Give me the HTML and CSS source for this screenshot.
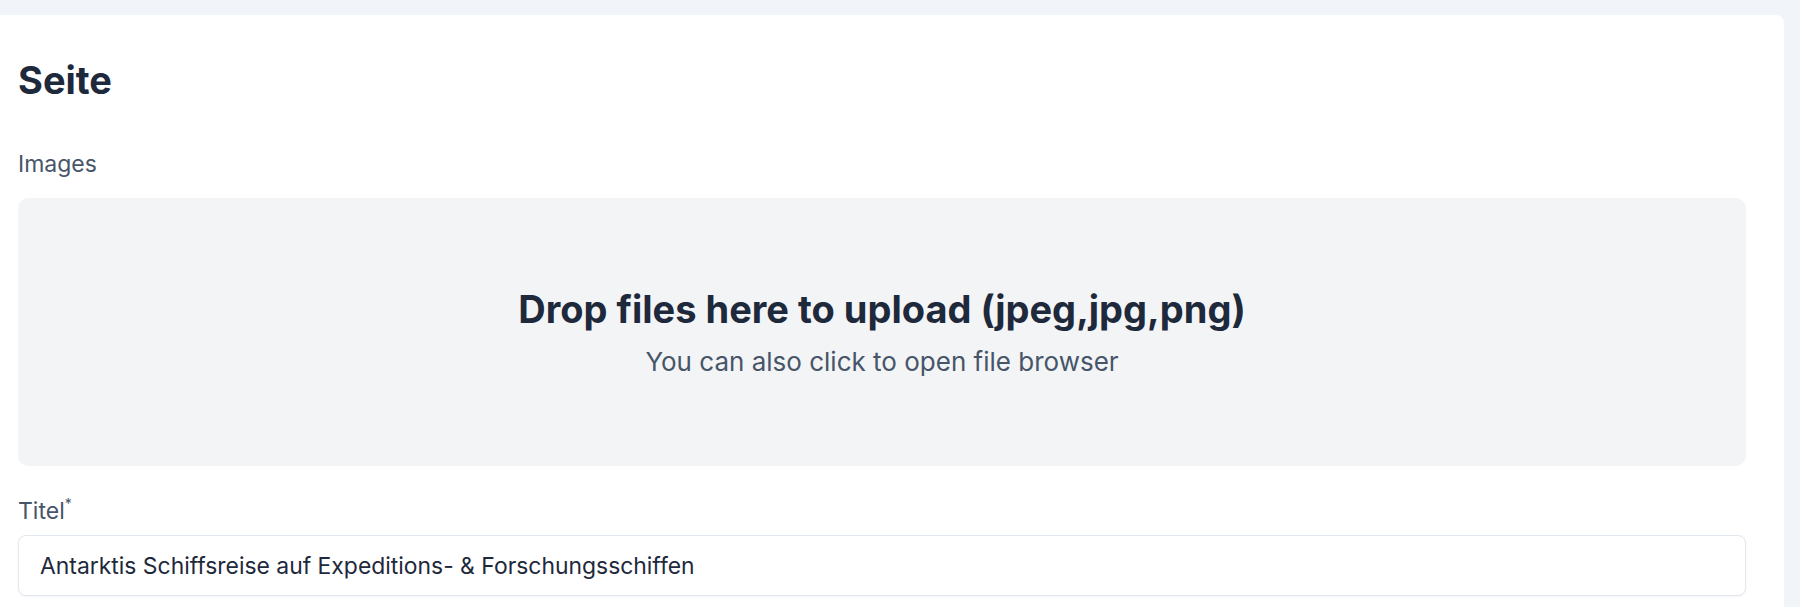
FILE: index.html
```html
<!DOCTYPE html>
<html lang="de">
<head>
  <meta charset="UTF-8">
  <title>Seite</title>
  <link rel="stylesheet" href="styles.css">
</head>
<body>

  <div class="page-card">
    <h1 class="section-title">Seite</h1>

    <div class="field">
      <label class="field-label">Images</label>
      <div class="dropzone">
        <p class="dropzone-title">Drop files here to upload (jpeg,jpg,png)</p>
        <p class="dropzone-hint">You can also click to open file browser</p>
      </div>
    </div>

    <div class="field field-title">
      <label class="field-label" for="titleInput">Titel<sup class="required">*</sup></label>
      <input type="text" id="titleInput" class="text-input" value="Antarktis Schiffsreise auf Expeditions- &amp; Forschungsschiffen">
    </div>
  </div>

</body>
</html>
```

FILE: styles.css
```css
* {
  box-sizing: border-box;
}

body {
  margin: 0;
  padding: 15px 16px 0 0;
  font-family: 'Inter', 'Noto Sans', sans-serif;
  background: #f1f4f8;
  height: 100vh;
  overflow: hidden;
}

.page-card {
  background: white;
  border-top-right-radius: 8px;
  padding: 45px 38px 0 18px;
  height: 100%;
}

.section-title {
  margin: 0;
  font-size: 38px;
  line-height: 40px;
  font-weight: 700;
  color: #1e293b;
}

.field {
  display: flex;
  flex-direction: column;
}

.field-label {
  font-size: 23px;
  line-height: 28px;
  color: #475569;
}

.section-title + .field {
  margin-top: 50px;
}

.dropzone {
  margin-top: 20px;
  height: 268px;
  background: #f3f4f6;
  border-radius: 10px;
  display: flex;
  flex-direction: column;
  justify-content: center;
  align-items: center;
  gap: 16px;
  padding-top: 2px;
  cursor: pointer;
}

.dropzone p {
  margin: 0;
}

.dropzone-title {
  font-size: 38px;
  line-height: 42px;
  font-weight: 700;
  color: #1e293b;
}

.dropzone-hint {
  font-size: 26px;
  line-height: 32px;
  color: #475569;
}

.field-title {
  margin-top: 31px;
}

.required {
  font-size: 14px;
  line-height: 0;
  vertical-align: 10px;
  color: #475569;
}

.text-input {
  margin-top: 10px;
  height: 61px;
  padding: 0 21px;
  font-family: inherit;
  font-size: 22.9px;
  color: #1e293b;
  background: white;
  border: 1px solid #e2e8f0;
  border-radius: 8px;
  box-shadow: 0 1px 2px rgba(15, 23, 42, 0.05);
  outline: none;
}
```
